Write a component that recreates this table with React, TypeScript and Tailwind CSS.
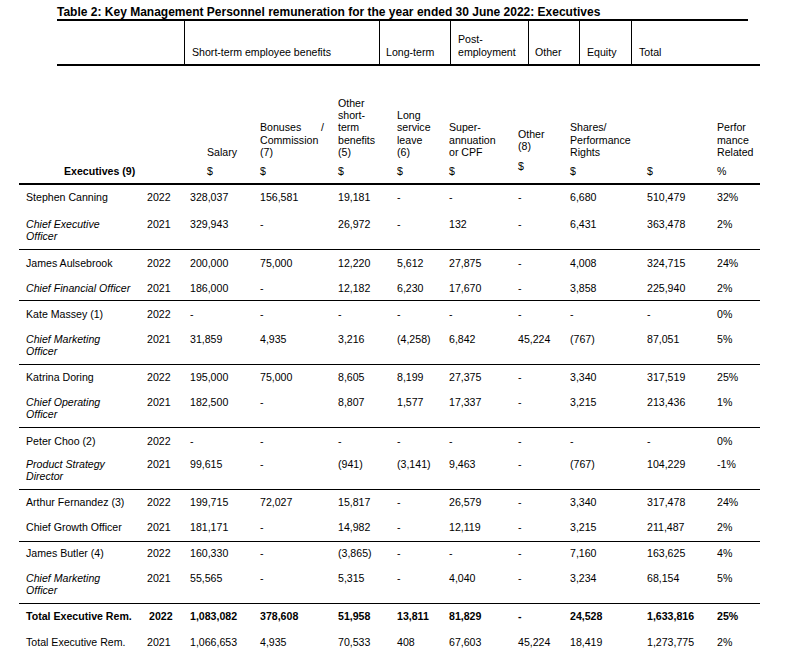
import React from "react";

type Row = { label: string; italic?: boolean; bold?: boolean; vals: string[]; lines?: string[] };
type Group = { a: Row; b: Row; gap: string; pt: string; pb: string; border?: boolean };

const grid =
  "grid grid-cols-[121px_43px_70px_78px_59px_52px_69px_52px_77px_70px_43px]";

const groups: Group[] = [
  {
    a: { label: "Stephen Canning", vals: ["2022", "328,037", "156,581", "19,181", "-", "-", "-", "6,680", "510,479", "32%"] },
    b: { label: "", lines: ["Chief Executive", "Officer"], italic: true, vals: ["2021", "329,943", "-", "26,972", "-", "132", "-", "6,431", "363,478", "2%"] },
    gap: "gap-y-[15px]", pt: "pt-[6px]", pb: "pb-[7px]", border: true,
  },
  {
    a: { label: "James Aulsebrook", vals: ["2022", "200,000", "75,000", "12,220", "5,612", "27,875", "-", "4,008", "324,715", "24%"] },
    b: { label: "", lines: ["Chief Financial Officer"], italic: true, vals: ["2021", "186,000", "-", "12,182", "6,230", "17,670", "-", "3,858", "225,940", "2%"] },
    gap: "gap-y-[13px]", pt: "pt-[7px]", pb: "pb-[6px]", border: true,
  },
  {
    a: { label: "Kate Massey (1)", vals: ["2022", "-", "-", "-", "-", "-", "-", "-", "-", "0%"] },
    b: { label: "", lines: ["Chief Marketing", "Officer"], italic: true, vals: ["2021", "31,859", "4,935", "3,216", "(4,258)", "6,842", "45,224", "(767)", "87,051", "5%"] },
    gap: "gap-y-[13px]", pt: "pt-[7px]", pb: "pb-[7px]", border: true,
  },
  {
    a: { label: "Katrina Doring", vals: ["2022", "195,000", "75,000", "8,605", "8,199", "27,375", "-", "3,340", "317,519", "25%"] },
    b: { label: "", lines: ["Chief Operating", "Officer"], italic: true, vals: ["2021", "182,500", "-", "8,807", "1,577", "17,337", "-", "3,215", "213,436", "1%"] },
    gap: "gap-y-[13px]", pt: "pt-[6px]", pb: "pb-[7px]", border: true,
  },
  {
    a: { label: "Peter Choo (2)", vals: ["2022", "-", "-", "-", "-", "-", "-", "-", "-", "0%"] },
    b: { label: "", lines: ["Product Strategy", "Director"], italic: true, vals: ["2021", "99,615", "-", "(941)", "(3,141)", "9,463", "-", "(767)", "104,229", "-1%"] },
    gap: "gap-y-[11px]", pt: "pt-[7px]", pb: "pb-[7px]", border: true,
  },
  {
    a: { label: "Arthur Fernandez (3)", vals: ["2022", "199,715", "72,027", "15,817", "-", "26,579", "-", "3,340", "317,478", "24%"] },
    b: { label: "", lines: ["Chief Growth Officer"], vals: ["2021", "181,171", "-", "14,982", "-", "12,119", "-", "3,215", "211,487", "2%"] },
    gap: "gap-y-[13px]", pt: "pt-[6px]", pb: "pb-[8px]", border: true,
  },
  {
    a: { label: "James Butler (4)", vals: ["2022", "160,330", "-", "(3,865)", "-", "-", "-", "7,160", "163,625", "4%"] },
    b: { label: "", lines: ["Chief Marketing", "Officer"], italic: true, vals: ["2021", "55,565", "-", "5,315", "-", "4,040", "-", "3,234", "68,154", "5%"] },
    gap: "gap-y-[13px]", pt: "pt-[5px]", pb: "pb-[7px]", border: true,
  },
  {
    a: { label: "Total Executive Rem.", bold: true, vals: ["2022", "1,083,082", "378,608", "51,958", "13,811", "81,829", "-", "24,528", "1,633,816", "25%"] },
    b: { label: "", lines: ["Total Executive Rem."], vals: ["2021", "1,066,653", "4,935", "70,533", "408", "67,603", "45,224", "18,419", "1,273,775", "2%"] },
    gap: "gap-y-[14px]", pt: "pt-[6px]", pb: "pb-[0px]", border: false,
  },
];

function Cells({ row }: { row: Row }) {
  const lines = row.lines ?? [row.label];
  return (
    <>
      <div className={`${row.italic ? "italic" : ""} ${row.bold ? "font-bold" : ""}`}>
        {lines.map((l, i) => (
          <div key={i}>{l}</div>
        ))}
      </div>
      {row.vals.map((v, i) => (
        <div key={i} className={`${row.bold ? "font-bold" : ""} ${row.bold && i === 0 ? "pl-[2px]" : ""}`}>
          {v}
        </div>
      ))}
    </>
  );
}

export default function App() {
  return (
    <div className="w-[792px] h-[654px] bg-white text-black font-['Liberation_Sans',Arial,sans-serif] text-[10.6px] overflow-hidden">
      <div className="h-[19px] pl-[57px] pt-[5px] text-[12px] leading-[14px] font-bold">
        Table 2: Key Management Personnel remuneration for the year ended 30 June 2022: Executives
      </div>
      <div className="ml-[57px] w-[691px] h-[2px] bg-black" />
      <div className="ml-[57px] w-[703px] h-[45px] flex border-b-2 border-black leading-[12.4px]">
        <div className="w-[127px]" />
        <div className="w-[195px] border-l border-black flex flex-col justify-end pl-[7px] pb-[6px]">Short-term employee benefits</div>
        <div className="w-[71px] border-l border-black flex flex-col justify-end pl-[6px] pb-[6px]">Long-term</div>
        <div className="w-[78px] border-l border-black flex flex-col justify-end pl-[7px] pb-[6px]">
          <div>Post-</div>
          <div>employment</div>
        </div>
        <div className="w-[51px] border-l border-black flex flex-col justify-end pl-[6px] pb-[6px]">Other</div>
        <div className="w-[52px] border-l border-black flex flex-col justify-end pl-[7px] pb-[6px]">Equity</div>
        <div className="w-[129px] border-l border-black flex flex-col justify-end pl-[7px] pb-[6px]">Total</div>
      </div>
      <div className={`ml-[19px] w-[741px] pl-[7px] h-[119px] border-b-2 border-black ${grid} items-end leading-[12.4px] pb-[6px]`}>
        <div className="pl-[38px] font-bold">Executives (9)</div>
        <div />
        <div className="pl-[17px]">
          <div>Salary</div>
          <div className="mt-[6px]">$</div>
        </div>
        <div>
          <div className="w-[64px] flex justify-between">
            <span>Bonuses</span>
            <span>/</span>
          </div>
          <div>Commission</div>
          <div>(7)</div>
          <div className="mt-[6px]">$</div>
        </div>
        <div>
          <div>Other</div>
          <div>short-</div>
          <div>term</div>
          <div>benefits</div>
          <div>(5)</div>
          <div className="mt-[6px]">$</div>
        </div>
        <div>
          <div>Long</div>
          <div>service</div>
          <div>leave</div>
          <div>(6)</div>
          <div className="mt-[6px]">$</div>
        </div>
        <div>
          <div>Super-</div>
          <div>annuation</div>
          <div>or CPF</div>
          <div className="mt-[6px]">$</div>
        </div>
        <div className="mb-[5px]">
          <div>Other</div>
          <div>(8)</div>
          <div className="mt-[7px]">$</div>
        </div>
        <div>
          <div>Shares/</div>
          <div>Performance</div>
          <div>Rights</div>
          <div className="mt-[6px]">$</div>
        </div>
        <div>
          <div>$</div>
        </div>
        <div>
          <div>Perfor</div>
          <div>mance</div>
          <div>Related</div>
          <div className="mt-[6px]">%</div>
        </div>
      </div>
      {groups.map((g, i) => (
        <div
          key={i}
          className={`ml-[19px] w-[741px] pl-[7px] ${g.pt} ${g.pb} ${g.border ? "border-b border-black" : ""}`}
        >
          <div className={`${grid} ${g.gap} leading-[12px] items-start`}>
            <Cells row={g.a} />
            <Cells row={g.b} />
          </div>
        </div>
      ))}
    </div>
  );
}
